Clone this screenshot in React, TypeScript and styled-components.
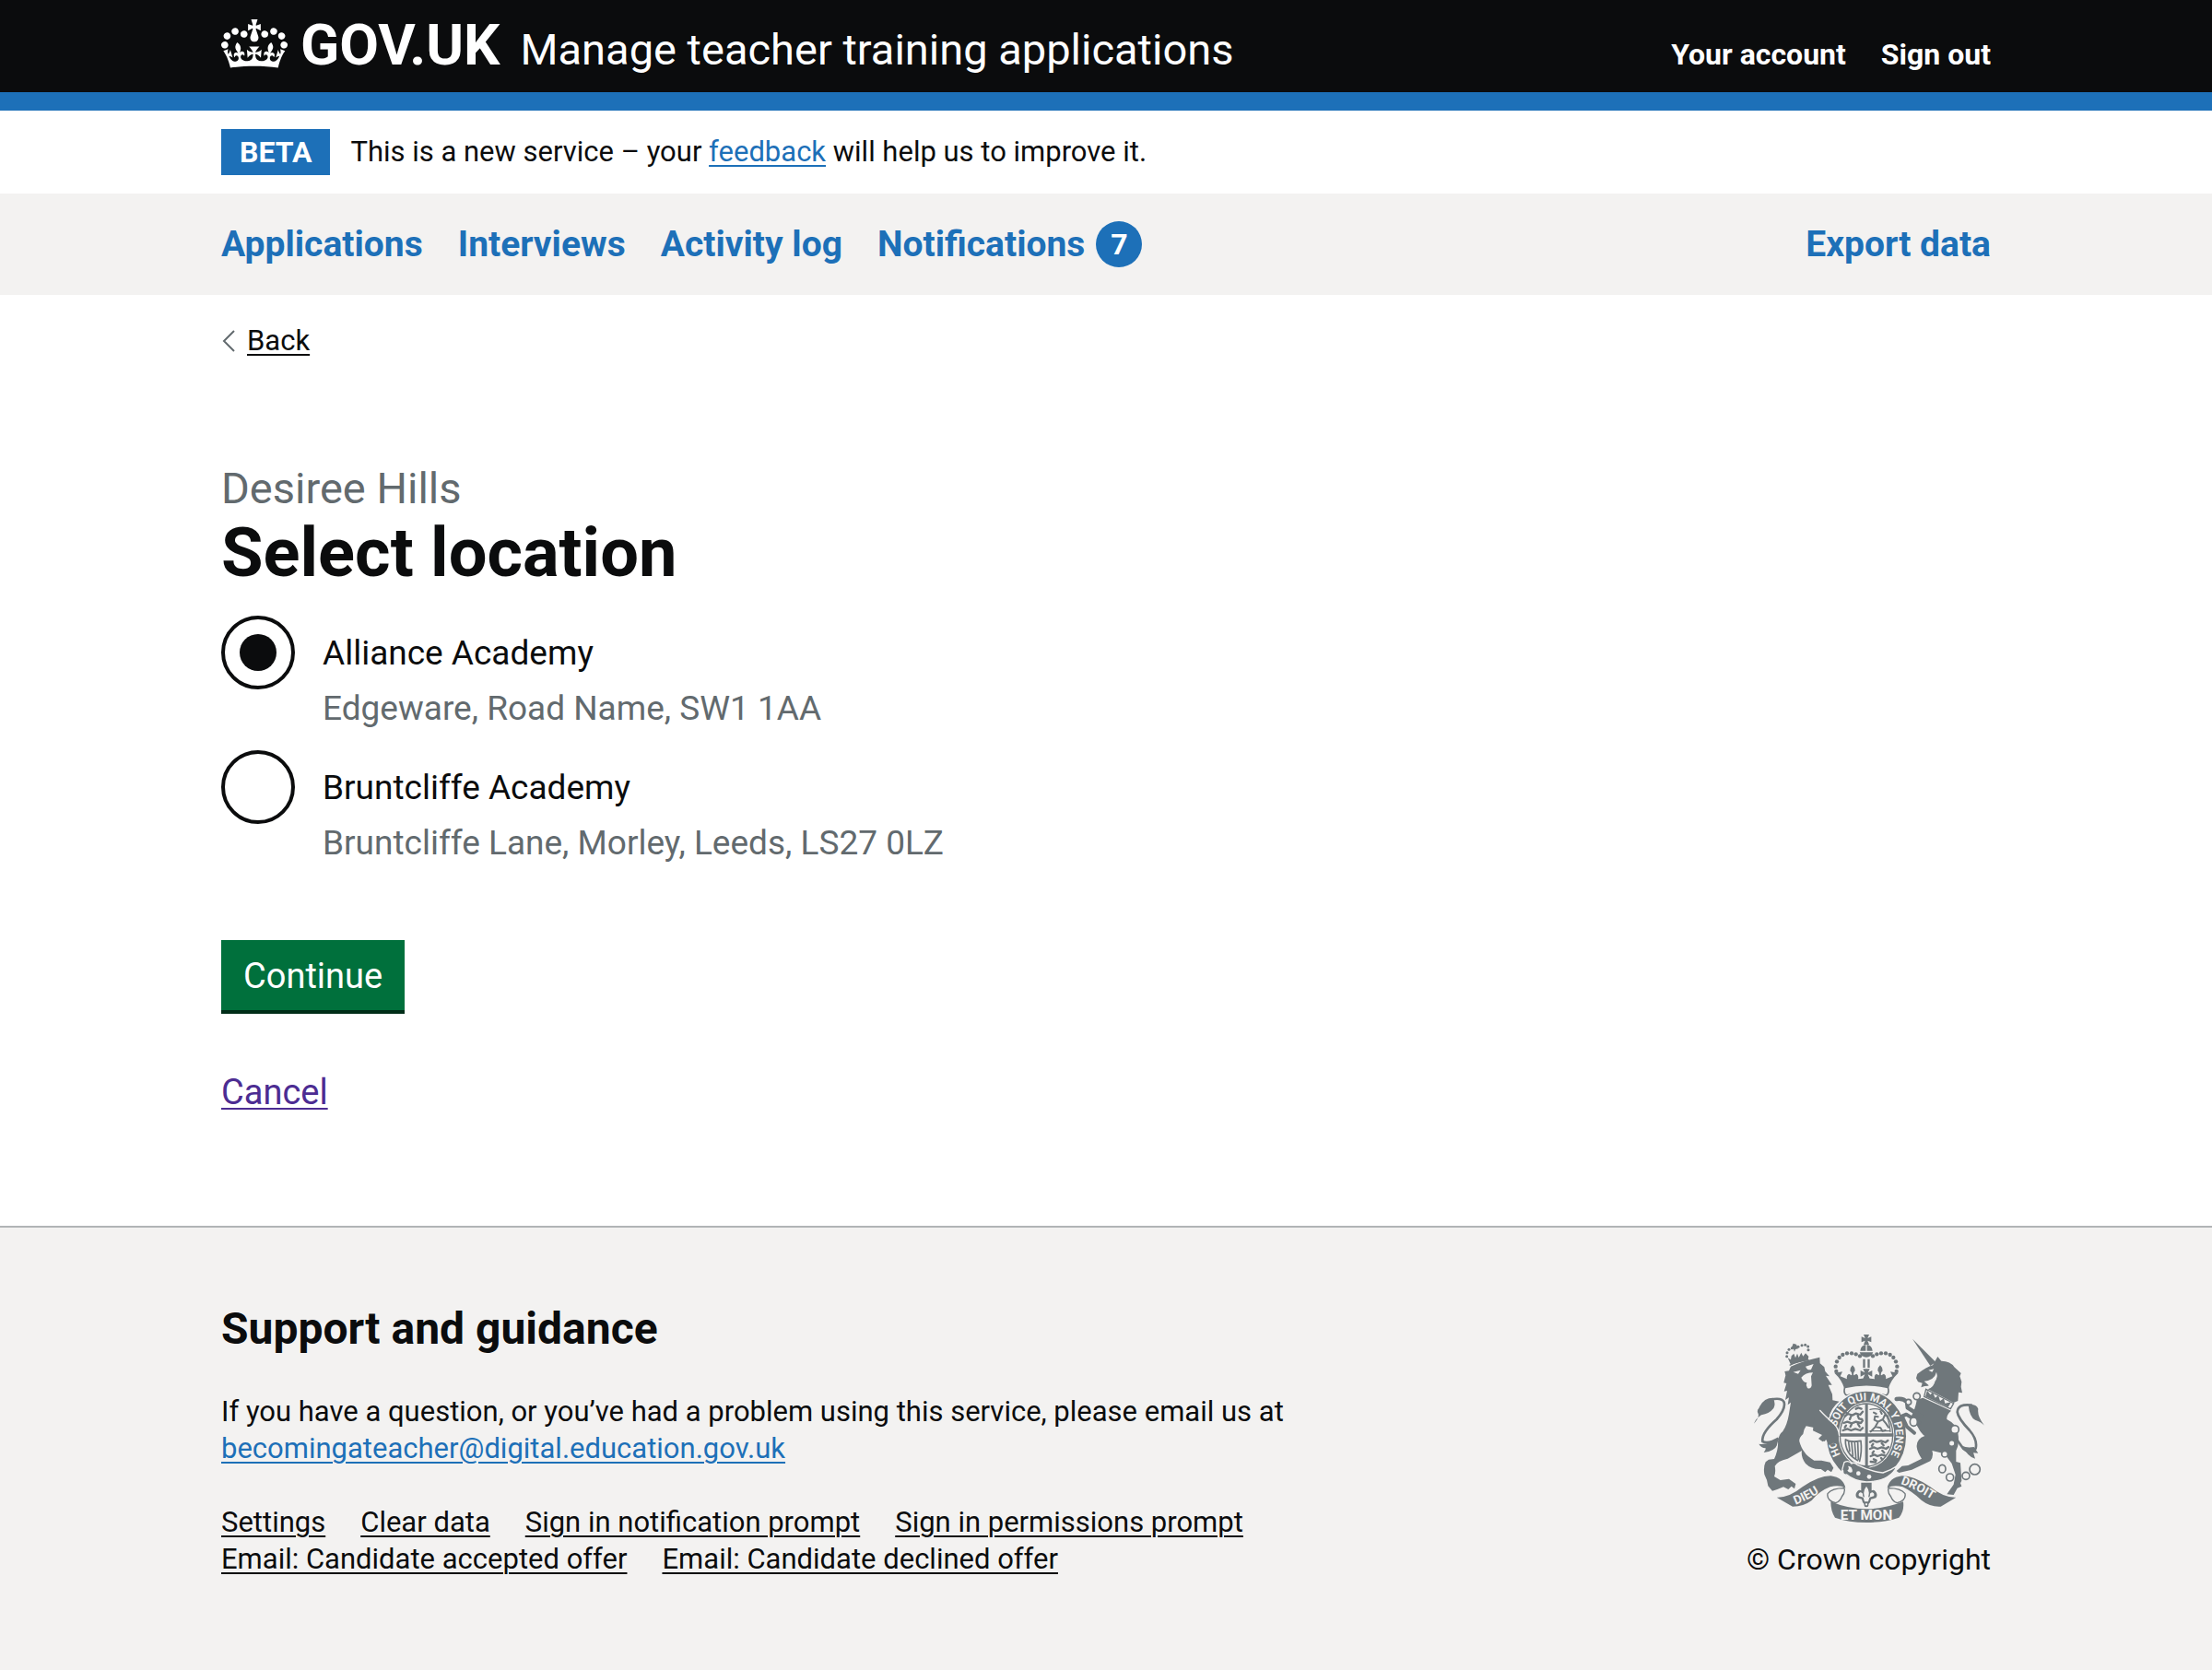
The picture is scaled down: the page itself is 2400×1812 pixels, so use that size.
import React, { useState } from "react";
import styled, { createGlobalStyle, css } from "styled-components";

const sans = `Roboto, "Noto Sans", Arial, sans-serif`;
const ink = "#0b0c0d";
const blue = "#1d70b8";
const grey = "#f3f2f1";
const muted = "#626a6e";
const crestGrey = "#6f777b";

const GlobalStyle = createGlobalStyle`
  *, *::before, *::after { box-sizing: border-box; }
  body {
    margin: 0;
    background: ${grey};
    color: ${ink};
    font-family: ${sans};
    font-size: 31px;
    line-height: 40px;
  }
`;

const Container = styled.div`
  max-width: 1920px;
  margin: 0 auto;
  @media (max-width: 2040px) { margin: 0 60px; }
`;

const Link = styled.a<{ $tone?: string }>`
  color: ${(p) => p.$tone ?? ink};
  text-decoration: underline;
  text-decoration-thickness: 2px;
  text-underline-offset: 4px;
`;

const Header = styled.header`
  background: ${ink};
  border-bottom: 20px solid ${blue};
  padding: 9px 0 11px;
`;

const HeaderRow = styled(Container)`
  display: flex;
  flex-wrap: wrap;
  align-items: baseline;
  justify-content: space-between;
`;

const Brand = styled.div`
  display: flex;
  flex-wrap: wrap;
  align-items: baseline;
  gap: 22px;
`;

const headerLink = css`
  color: #fff;
  text-decoration: none;
`;

const Logo = styled.a`
  ${headerLink}
  font-size: 62px;
  font-weight: 700;
  line-height: 80px;
  svg { margin-right: 14px; vertical-align: -4px; fill: currentColor; }
`;

const ServiceName = styled.a`
  ${headerLink}
  font-size: 47px;
`;

const AccountNav = styled.nav`
  display: flex;
  gap: 38px;
  font-size: 32px;
  a { ${headerLink} font-weight: 700; }
`;

const White = styled.div`
  background: #fff;
`;

const PhaseBanner = styled(Container)`
  display: flex;
  gap: 22px;
  padding: 20px 0;
  line-height: 50px;
`;

const Tag = styled.strong`
  padding: 0 20px;
  background: ${blue};
  color: #fff;
  font-size: 32px;
`;

const PrimaryNav = styled.nav`
  padding: 30px 0;
  font-size: 39px;
  font-weight: 700;
  line-height: 50px;
`;

const NavRow = styled(Container)`
  display: flex;
  flex-wrap: wrap;
  gap: 0 38px;
  a { color: ${blue}; text-decoration: none; }
  a:last-child { margin-left: auto; }
`;

const NotificationLink = styled.a`
  display: flex;
  gap: 12px;
`;

const Badge = styled.span`
  width: 50px;
  height: 50px;
  border-radius: 50%;
  background: ${blue};
  color: #fff;
  font-size: 32px;
  text-align: center;
`;

const Page = styled(Container)`
  padding: 30px 0 120px;
`;

const BackLink = styled.div`
  display: flex;
  align-items: center;
  gap: 12px;
  margin-bottom: 110px;
`;

const Caption = styled.span`
  display: block;
  color: ${muted};
  font-size: 47px;
  font-weight: 400;
  line-height: 60px;
`;

const Heading = styled.h1`
  margin: 0 0 28px;
  font-size: 74px;
  line-height: 80px;
`;

const Radios = styled.fieldset`
  display: grid;
  gap: 20px;
  margin: 0 0 80px;
  padding: 0;
  border: 0;
  font-size: 37px;
  line-height: 50px;
`;

const RadioItem = styled.div`
  display: flex;
  gap: 30px;
`;

const RadioInput = styled.input`
  appearance: none;
  flex: none;
  width: 80px;
  height: 80px;
  margin: 0;
  padding: 16px;
  border: 4px solid ${ink};
  border-radius: 50%;
  &:checked::before {
    content: "";
    display: block;
    width: 40px;
    height: 40px;
    border-radius: 50%;
    background: ${ink};
  }
`;

const RadioText = styled.div`
  display: grid;
  gap: 10px;
  padding-top: 16px;
`;

const Hint = styled.div`
  color: ${muted};
`;

const Button = styled.button`
  display: block;
  margin: 0 0 60px;
  padding: 14px 24px 12px;
  border: 0;
  border-bottom: 4px solid #002d18;
  background: #00703c;
  color: #fff;
  font-family: inherit;
  font-size: 38px;
  line-height: 50px;
`;

const CancelRow = styled.div`
  font-size: 38px;
  line-height: 50px;
`;

const Footer = styled.footer`
  border-top: 2px solid #b1b4b6;
  padding: 80px 0 100px;
`;

const FooterRow = styled(Container)`
  display: flex;
  align-items: flex-end;
  justify-content: space-between;
  gap: 60px;
`;

const FooterHeading = styled.h2`
  margin: 0 0 40px;
  font-size: 48px;
  line-height: 60px;
`;

const FooterText = styled.p`
  margin: 0 0 40px;
`;

const FooterLinks = styled.ul`
  display: flex;
  flex-wrap: wrap;
  gap: 0 38px;
  max-width: 1240px;
  margin: 0;
  padding: 0;
  list-style: none;
`;

const Copyright = styled.div`
  display: grid;
  justify-items: center;
  gap: 20px;
  font-size: 32px;
  text-align: center;
  white-space: nowrap;
`;

const Crown = () => (
  <svg width="72" height="53" viewBox="0 0 132 97" aria-hidden="true">
    <path d="M25 30.2c3.5 1.5 7.7-.2 9.1-3.7 1.5-3.6-.2-7.8-3.9-9.2-3.6-1.4-7.6.3-9.1 3.9-1.4 3.5.3 7.5 3.9 9zM9 39.5c3.6 1.5 7.8-.2 9.2-3.7 1.5-3.6-.2-7.8-3.9-9.1-3.6-1.5-7.6.2-9.1 3.8-1.4 3.5.3 7.5 3.8 9zM4.4 57.2c3.5 1.5 7.7-.2 9.1-3.8 1.5-3.6-.2-7.7-3.9-9.1-3.5-1.5-7.6.3-9.1 3.8-1.4 3.5.3 7.6 3.9 9.1zm38.3-21.4c3.5 1.5 7.7-.2 9.1-3.8 1.5-3.6-.2-7.7-3.9-9.1-3.6-1.5-7.6.3-9.1 3.8-1.3 3.6.4 7.7 3.9 9.1zm64.4-5.6c-3.6 1.5-7.8-.2-9.1-3.7-1.5-3.6.2-7.8 3.8-9.2 3.6-1.4 7.7.3 9.2 3.9 1.3 3.5-.4 7.5-3.9 9zm15.9 9.3c-3.6 1.5-7.7-.2-9.1-3.7-1.5-3.6.2-7.8 3.7-9.1 3.6-1.5 7.7.2 9.2 3.8 1.5 3.5-.3 7.5-3.8 9zm4.7 17.7c-3.6 1.5-7.8-.2-9.2-3.8-1.5-3.6.2-7.7 3.9-9.1 3.6-1.5 7.7.3 9.2 3.8 1.3 3.5-.4 7.6-3.9 9.1zM89.3 35.8c-3.6 1.5-7.8-.2-9.2-3.8-1.4-3.6.2-7.7 3.9-9.1 3.6-1.5 7.7.3 9.2 3.8 1.4 3.6-.3 7.7-3.9 9.1zM69.7 17.7l8.9 4.7V9.3l-8.9 2.8c-.2-.3-.5-.6-.9-.9L72.4 0H59.6l3.5 11.2c-.3.3-.6.5-.9.9l-8.8-2.8v13.1l8.8-4.7c.3.3.6.7.9.9l-5 15.4v.1c-.2.8-.4 1.6-.4 2.4 0 4.1 3.1 7.5 7 8.1h.2c.3 0 .7.1 1 .1.4 0 .7 0 1-.1h.2c4-.6 7.1-4.1 7.1-8.1 0-.8-.1-1.7-.4-2.4V34l-5.1-15.4c.4-.2.7-.6 1-.9zM66 92.8c16.9 0 32.8 1.1 47.1 3.2 4-16.9 8.9-26.7 14-33.5l-9.6-3.4c1 4.9 1.1 7.2 0 10.2-1.5-1.4-3-4.3-4.2-8.7L108.6 76c2.8-2 5-3.2 7.5-3.3-4.4 9.4-10 11.9-13.6 11.2-4.3-.8-6.3-4.6-5.6-7.9 1-4.7 5.7-5.9 8-.5 4.3-8.7-3-11.4-7.6-8.8 7.1-7.2 7.9-13.5 2.1-21.1-8 6.1-8.1 12.3-4.5 20.8-4.7-5.4-12.1-2.5-9.5 6.2 3.4-5.2 7.9-2 7.2 3.1-.6 4.3-6.4 7.8-13.5 7.2-10.3-.9-10.9-8-11.2-13.8 2.5-.5 7.1 1.8 11 7.3L80.2 60c-4.1 4.4-8 5.3-12.3 5.4 1.4-4.4 8-11.6 8-11.6H55.5s6.4 7.2 7.9 11.6c-4.2-.1-8-1-12.3-5.4l1.4 16.4c3.9-5.5 8.5-7.7 10.9-7.3-.3 5.8-.9 12.8-11.1 13.8-7.2.6-12.9-2.9-13.5-7.2-.7-5 3.8-8.3 7.1-3.1 2.7-8.7-4.6-11.6-9.4-6.2 3.7-8.5 3.6-14.7-4.6-20.8-5.8 7.6-5 13.9 2.2 21.1-4.7-2.6-11.9.1-7.7 8.8 2.3-5.5 7.1-4.2 8.1.5.7 3.3-1.3 7.1-5.7 7.9-3.5.7-9-1.8-13.5-11.2 2.5.1 4.7 1.3 7.5 3.3l-4.7-15.4c-1.2 4.4-2.7 7.2-4.3 8.7-1.1-3-.9-5.3 0-10.2l-9.5 3.4c5 6.9 9.9 16.7 14 33.5 14.8-2.1 30.8-3.2 47.7-3.2z" />
  </svg>
);

const archBeads = [
  [340, 204], [338, 188], [342, 172], [350, 159], [361, 150], [375, 145], [390, 145], [404, 148], [417, 154],
];
const smallBeads = [
  [179, 155], [180, 143], [186, 133], [196, 128], [216, 124], [228, 119], [239, 118], [248, 123], [249, 134],
];

const Crest = () => (
  <svg width="250" height="204" viewBox="72 84 750 612" role="img" aria-label="Royal coat of arms" fill={crestGrey}>
    <defs>
      <path id="garter" d="M372 499A98 114 0 1 1 488 509" />
      <path id="dieu" d="M208 638Q262 618 322 572" />
      <path id="droit" d="M549 570Q600 586 682 640" />
    </defs>

    {/* Lion */}
    {smallBeads.map(([x, y]) => (
      <circle key={x + "-" + y} cx={x} cy={y} r="4.5" />
    ))}
    <path d="M200 113l10 3 6 14-9 2-3 8-3-9-7-3zM182 160l10 6 2-12 8-8 5 14 6-14 5 13 8-16 6 12 8-10 10 10-2 12q-28 4-56 15z" />
    <path d="M188 184q30-14 63-17" fill="none" stroke={crestGrey} strokeWidth="4" />
    <path d="M172 204l14-2 6-14q44-20 94-30l1 20 14 12 3 14 14 16-12-2 20 30-12 0 13 30 1 20 22 4q-22 16-32 44l24 30 6 22-4 42-14-6-10 8-10-20-8 10-16-8 14-14-28-12 10-8-40-8q-8 10-10 26-14 12-12 24 6 22 16 34 8 14 32 28l24 0 28 6 11 18-7 14-12-8-8 8-14-10q-30 2-50-18-16-22-12-42l-46 26q-34 8-42 24 4 20-2 34l20 12 28-4 22 16-4 16-10-8-10 10-16-8-20 8-16 5-14-16q-2-20-12-38-4-24 4-40l10-8 18-2q14-30 12-56 2-24 16-34 14-20 20-56l6-38-10 8 4-24-12 8 6-30-10 2 8-26-9-2 6-24z" />
    <path d="M200 206l24-6-8 12zM240 188l26-8-8 18q-12 4-18-10zM226 224q14-16 38-16l-6 12 2 30q-4 14-14 8-6-10-2-18-10 2-18-16z" fill={grey} />
    <path d="M72 374q18-20 14-32-6-10 2-18 14-34 46-34 10 18 2 34-14 18-40 22-18 12-24 28z" />
    <path d="M126 296q36-8 44 8 6 22-24 56-50 44-46 72 18 10 52-10" fill="none" stroke={crestGrey} strokeWidth="8" />
    <path d="M88 440q14 4 40-6l24-10-6 22q-6 16-42 22 8-8 6-14-16-2-22-14z" />

    {/* Imperial crown */}
    {archBeads.map(([x, y]) => (
      <g key={x + "-" + y}>
        <circle cx={x} cy={y} r="6.5" />
        <circle cx={876 - x} cy={y} r="6.5" />
      </g>
    ))}
    <path d="M429 84h18l-5 12 12-5v18l-12-5 5 13h-18l5-13-12 5v-18l12 5zM418 137q2-18 18-20v20zM440 117q16 2 18 20h-18zM416 142h44q-6 16-22 16t-22-16zM427 164h7v28h-7zM442 164h7v28h-7zM427 196h22l-6 12 14-7v20l-14-7 6 14h-22l6-14-14 7v-20l14 7z" />
    <path d="M334 209l26-4-7 15 22 9q-3-12 6-17l9 5q3-8-5-15 0-11 8-18 9 8 8 18-7 7-4 15l9-5q8 5 5 17 27-5 54 0-3-12 5-17l9 5q3-8-4-15-1-10 8-18 8 7 8 18-8 7-5 15l9-5q9 5 6 17l22-9-7-15 26 4q-24 22-32 50-74-16-144 0-8-28-32-50z" />
    <path d="M368 256q-6 20 6 26 64-20 128 0 12-6 6-26-70-16-140 0z" fill={grey} stroke={crestGrey} strokeWidth="5" />

    {/* Garter and shield */}
    <ellipse cx="438" cy="415" rx="131" ry="148" stroke={grey} strokeWidth="4" />
    <ellipse cx="438" cy="411" rx="91" ry="107" fill={grey} />
    <ellipse cx="438" cy="411" rx="86" ry="102" fill="none" stroke={crestGrey} strokeWidth="4" />
    <path d="M434 310h9v204h-9zM350 406h176v10H350z" />
    <g fill="none" stroke={crestGrey} strokeWidth="7" strokeLinecap="round" strokeLinejoin="round">
      <path d="M368 350l10-8 14 5 12-6 14 4 8-10M376 342l-6-6M388 350l-4 10M410 348l4 10 10 2M364 372l12-4 14 5 14-5 16 4 6-8M372 380l-4 6M390 376l-4 8M410 374l6 10M362 396l14-5 12 5 14-5 16 5 8-8M404 326l8-4 10 4" />
      <path d="M450 434l10-5 12 5 14-4 14 5 8-6M450 456l12-5 12 5 14-5 14 5 8-6M452 480l12-5 10 5 14-5 12 4M460 440l-4 6M488 438l6 7M462 464l-4 6M490 462l6 7M462 490l8 4M486 486l4 5M452 498l16 2" />
      <path d="M452 400l14-14 10-18 16-8 6-14 10 4M468 384l16 4 6 10 10-2M476 368l-12-6 2-12 10 2M492 362l10 12 8 12M462 338l8 4M488 342l-4-8" strokeWidth="6" />
      <path d="M450 328q60-14 66 72M450 398h66" strokeWidth="4" />
      <path d="M370 426q16 10 50 4M370 426q-2 46 40 68M420 430q4 34-4 66M380 434l4 30M390 436l4 42M400 436l4 50M410 436l2 54" strokeWidth="5" />
    </g>
    <path d="M450 512l-12 16-14-16z" />
    <text fill={grey} fontFamily={sans} fontWeight="700" fontSize="35">
      <textPath href="#garter" startOffset="30">HONI SOIT QUI MAL Y PENSE</textPath>
    </text>
    <path d="M366 500q14-8 24 4 8-6 18 4 44 22 84 26 26-8 46-22-24 50-100 52-40-4-64-24-14 2-12-14-8 14 4-26z" stroke={grey} strokeWidth="4" />
    <path d="M378 512q16 0 14 20-12 4-16-6 8-4 2-14z" fill={grey} />
    <circle cx="412" cy="536" r="7" fill={grey} />
    <circle cx="447" cy="547" r="7" fill={grey} />

    {/* Lion's foreleg, in front of the garter */}
    <path d="M284 332q22 24 44 42 18 16 20 38l-2 30-16-5-12 8-12-20-10 8-14-10 12-12-30-14 4-40z" />
    <path d="M286 330q24 26 44 42 18 16 20 42" fill="none" stroke={grey} strokeWidth="4" />

    {/* Unicorn */}
    <path d="M588 98l76 76-18 12z" />
    <path d="M654 184l16-28 12 14q30 0 42 20l22 20-4 10 6 18-2 16 4 20-12-2-2 28-14 6-84-44q20-6 24-28-14 18-34 18l-12 4 4-14-14-4-6-12 4-14q30-22 50-28z" />
    <path d="M640 200l18-4-6 10zM626 236q34-4 40-30 10 24-22 46z" fill={grey} />
    <path d="M632 262l90 46-10 18-86-40z" fill={grey} stroke={crestGrey} strokeWidth="4" />
    <path d="M636 266l10 14 8-8 8 18 10-8 6 18 12-8 4 16 20-4-10 16-74-34z" />
    <path d="M622 290l92 42q-16 14-14 28 32 16 36 44 6 36-6 58l0 36 14 4 4 58-4 8 4 10-14 6-12 22-22-2 22-32 6-32-12-36-24-32-40-10q6 18-6 34l-60 28-42 10-8-6 18-16 20-2 44-22q-14-20-16-38-2-26 26-36-12-8-22-28l-22-36q14-24 18-54z" />
    <g fill="none" stroke={crestGrey} strokeLinecap="round" strokeLinejoin="round">
      <path d="M616 350l-44-28-2-18q-12-14-34-10" strokeWidth="13" />
      <path d="M610 370l-42-26-14 6 16 34 24 20" strokeWidth="12" />
      <path d="M780 314q-44-6-46 22 2 20 40 60 26 30 20 58-10 26-40 2l-20-28" strokeWidth="8" />
    </g>
    <path d="M764 314q30-8 38 12-4 24 20 54-10-12-30-18-18-10-22-48zM750 446q14 8 38 4l14 20q-12 0-16-2l6 20q-24-6-42-42z" />
    <g fill={grey} stroke={crestGrey} strokeWidth="5">
      <circle cx="602" cy="285" r="11" />
      <circle cx="575" cy="304" r="9" />
      <ellipse cx="592" cy="368" rx="12" ry="14" />
      <circle cx="726" cy="393" r="13" />
      <circle cx="716" cy="438" r="10" />
      <circle cx="693" cy="473" r="10" />
      <ellipse cx="685" cy="521" rx="11" ry="13" />
      <circle cx="710" cy="549" r="12" />
      <circle cx="762" cy="544" r="12" />
      <circle cx="791" cy="523" r="17" />
    </g>

    {/* Pendant */}
    <path d="M421 566h34v26q6-4 12 2 10 10 2 22l-16 4q-2 12-8 16 2 10-7 10t-7-10q-6-4-8-16l-16-4q-8-12 2-22 6-6 12-2z" />
    <path d="M438 578q10 12 8 26l-2 10 6-4q-2-12 8-12 8 4 4 12l-14 4-4 14h-12l-4-14-14-4q-4-8 4-12 10 0 8 12l6 4-2-10q-2-14 8-26zM435 634h6v6h-6z" fill={grey} />

    {/* Ribbon */}
    <g fill="none" stroke={crestGrey} strokeWidth="4">
      <path d="M366 584q-40 0-54 18-4 22 26 30 14-4 20-20 12-14 8-28M510 584q40 0 54 18 4 22-26 30-14-4-20-20-12-14-8-28" />
    </g>
    <path d="M146 614q40 2 84-34 52-36 92-36 42 6 48 40-20-12-50-4-36 14-60 44-26 20-62 20z" />
    <path d="M730 614q-40 2-84-34-52-36-92-36-42 6-48 40 20-12 50-4 30 14 62 44 28 22 62 20z" />
    <path d="M322 628q58 24 116 24t120-24q4 32-14 52-48 16-106 16t-102-16q-14-20-14-52z" />
    <g fill={grey} fontFamily={sans} fontWeight="700" fontSize="40">
      <text><textPath href="#dieu">DIEU</textPath></text>
      <text><textPath href="#droit">DROIT</textPath></text>
      <text x="438" y="688" textAnchor="middle" fontSize="46">ET MON</text>
    </g>
  </svg>
);

const locations = [
  { id: "alliance", name: "Alliance Academy", address: "Edgeware, Road Name, SW1 1AA" },
  { id: "bruntcliffe", name: "Bruntcliffe Academy", address: "Bruntcliffe Lane, Morley, Leeds, LS27 0LZ" },
];

const footerLinks = [
  "Settings",
  "Clear data",
  "Sign in notification prompt",
  "Sign in permissions prompt",
  "Email: Candidate accepted offer",
  "Email: Candidate declined offer",
];

export default function App() {
  const [selected, setSelected] = useState("alliance");
  return (
    <>
      <GlobalStyle />
      <Header>
        <HeaderRow>
          <Brand>
            <Logo href="#"><Crown />GOV.UK</Logo>
            <ServiceName href="#">Manage teacher training applications</ServiceName>
          </Brand>
          <AccountNav aria-label="Account">
            <a href="#">Your account</a>
            <a href="#">Sign out</a>
          </AccountNav>
        </HeaderRow>
      </Header>
      <White>
        <PhaseBanner>
          <Tag>BETA</Tag>
          <span>
            This is a new service – your <Link $tone={blue} href="#">feedback</Link> will help us to improve it.
          </span>
        </PhaseBanner>
      </White>
      <PrimaryNav aria-label="Primary">
        <NavRow>
          <a href="#">Applications</a>
          <a href="#">Interviews</a>
          <a href="#">Activity log</a>
          <NotificationLink href="#">Notifications<Badge>7</Badge></NotificationLink>
          <a href="#">Export data</a>
        </NavRow>
      </PrimaryNav>
      <White>
        <Page as="main">
          <BackLink>
            <svg width="16" height="24" viewBox="0 0 16 24" fill="none" stroke={muted} strokeWidth="2" aria-hidden="true">
              <path d="M14 1 3 12l11 11" />
            </svg>
            <Link href="#">Back</Link>
          </BackLink>
          <Heading>
            <Caption>Desiree Hills</Caption>
            Select location
          </Heading>
          <Radios aria-label="Select location">
            {locations.map((l) => (
              <RadioItem key={l.id}>
                <RadioInput
                  type="radio"
                  name="location"
                  id={l.id}
                  aria-describedby={l.id + "-hint"}
                  checked={selected === l.id}
                  onChange={() => setSelected(l.id)}
                />
                <RadioText>
                  <label htmlFor={l.id}>{l.name}</label>
                  <Hint id={l.id + "-hint"}>{l.address}</Hint>
                </RadioText>
              </RadioItem>
            ))}
          </Radios>
          <Button type="button">Continue</Button>
          <CancelRow>
            <Link $tone="#4c2c92" href="#">Cancel</Link>
          </CancelRow>
        </Page>
      </White>
      <Footer>
        <FooterRow>
          <div>
            <FooterHeading>Support and guidance</FooterHeading>
            <FooterText>
              If you have a question, or you’ve had a problem using this service, please email us at
              <br />
              <Link $tone={blue} href="#">becomingateacher@digital.education.gov.uk</Link>
            </FooterText>
            <FooterLinks>
              {footerLinks.map((text) => (
                <li key={text}><Link href="#">{text}</Link></li>
              ))}
            </FooterLinks>
          </div>
          <Copyright>
            <Crest />
            <span>© Crown copyright</span>
          </Copyright>
        </FooterRow>
      </Footer>
    </>
  );
}
